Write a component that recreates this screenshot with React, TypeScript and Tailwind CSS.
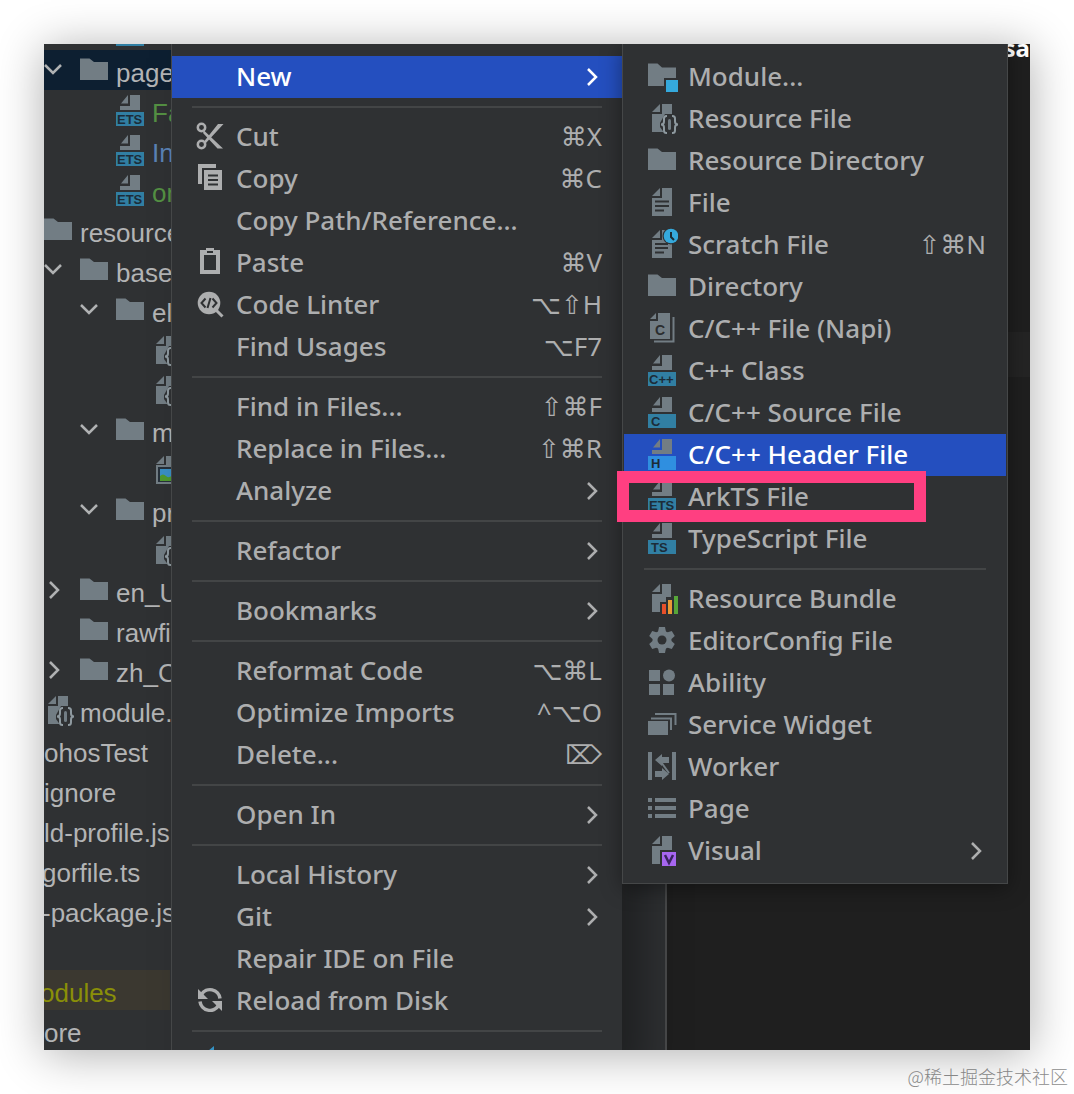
import type { ReactNode } from "react";
import clsx from "clsx";

type MenuEntry = {
  label: string;
  icon?: ReactNode;
  keys?: string;
  submenu?: boolean;
  active?: boolean;
};

type TreeEntry = {
  label: string;
  icon?: ReactNode;
  indent?: string;
  arrow?: "down" | "right" | "none";
  selected?: boolean;
  library?: boolean;
  color?: string;
};

/* ---------- icons ---------- */

function Icon({ children }: { children: ReactNode }) {
  return (
    <svg viewBox="0 0 32 32" className="h-8 w-8 shrink-0" fill="currentColor" aria-hidden="true">
      {children}
    </svg>
  );
}

function FolderIcon() {
  return (
    <Icon>
      <path d="M2 4.500h9.500l4.500 3.500h14V26H2z" />
    </Icon>
  );
}

function FileShape() {
  return <path d="M14 2L6 10h8zM16 2v10H6v18h20V2z" />;
}

function ModuleIcon() {
  return (
    <Icon>
      <path d="M2 3.500h9.500L16 7.500h14V18H18v8H2z" />
      <rect x="20" y="20" width="12" height="12" fill="#35a9dc" />
    </Icon>
  );
}

function JsonIcon() {
  return (
    <Icon>
      <FileShape />
      <path d="M19 12h9l4 8v7l-4 5h-9l-5-7v-4z" fill="#2f3133" />
      <g fill="none" stroke="#8e999f" strokeWidth="2">
        <path d="M21 14h-.5Q18 14 18 16.500v3Q18 22.500 15 22.500q3 0 3 3v3q0 2.500 2.500 2.500h.5" />
        <path d="M26 14h.5q2.500 0 2.500 2.500v3q0 3 3 3q-3 0-3 3v3q0 2.500-2.500 2.500H26" />
      </g>
      <rect x="22" y="17" width="3" height="11" rx="1.500" />
    </Icon>
  );
}

function TextFileIcon() {
  return (
    <Icon>
      <FileShape />
      <path d="M9 15.500h14M9 20h14M9 24.500h9" stroke="#2f3133" strokeWidth="2" />
    </Icon>
  );
}

function ScratchIcon() {
  return (
    <Icon>
      <FileShape />
      <path d="M9 16h13M9 20h13M9 24.500h9" stroke="#2f3133" strokeWidth="2" />
      <circle cx="25" cy="8" r="8.500" fill="#2f3133" />
      <circle cx="25" cy="8" r="7.300" fill="#35a9dc" />
      <path d="M25 4v5l3 3" stroke="#1d2b33" strokeWidth="2" fill="none" />
    </Icon>
  );
}

function NapiIcon() {
  return (
    <Icon>
      <path d="M10 1L4 7h6zM12 1v8H4v18h20V1z" />
      <path d="M8 29.500h19.500V5" fill="none" stroke="currentColor" strokeWidth="2" />
      <text x="9" y="23" fill="#2b2d2f" className="font-['Liberation_Sans'] text-[14px] font-bold">
        C
      </text>
    </Icon>
  );
}

function BadgeIcon({ text, bright }: { text: string; bright?: boolean }) {
  return (
    <Icon>
      <path d="M14 1L7 9.500h7zM16 1v11H6v4h20V1z" />
      <rect x="2" y="18" width="28" height="14" fill={bright ? "#2f8fe0" : "#317fa3"} />
      <text
        x={text.length === 3 ? 3 : 5}
        y="30"
        fill="#1c2c38"
        className="font-['Liberation_Sans'] text-[13px] font-bold"
      >
        {text}
      </text>
    </Icon>
  );
}

function ImageFileIcon() {
  return (
    <Icon>
      <path d="M14 2L6 10h8zM16 2v9H6v19h24V2z" />
      <rect x="8" y="13" width="22" height="15" fill="#26303a" />
      <rect x="10" y="15" width="20" height="12" fill="#3a8fc4" />
      <path d="M10 22q3-3 6 0t6-1l8 1v5H10z" fill="#4f9a2e" />
    </Icon>
  );
}

function BundleIcon() {
  return (
    <Icon>
      <path d="M14 2L6 10h8zM16 2v10H6v18h8V20h6v-5h5V2z" />
      <rect x="16" y="22" width="4" height="10" fill="#e8502a" />
      <rect x="22" y="18" width="4" height="14" fill="#ea9a35" />
      <rect x="28" y="14" width="4" height="18" fill="#57a639" />
    </Icon>
  );
}

function GearIcon() {
  return (
    <Icon>
      {[0, 60, 120].map((angle) => (
        <path key={angle} d="M13 3h6l1 5v16l-1 5h-6l-1-5V8z" transform={`rotate(${angle} 16 16)`} />
      ))}
      <circle cx="16" cy="16" r="9.500" />
      <circle cx="16" cy="16" r="4.500" fill="#2f3133" />
    </Icon>
  );
}

function AbilityIcon() {
  return (
    <Icon>
      <rect x="3" y="4" width="11" height="11" />
      <circle cx="23" cy="9.500" r="6" />
      <rect x="3" y="18" width="11" height="11" />
      <rect x="17" y="18" width="11" height="11" />
    </Icon>
  );
}

function WidgetIcon() {
  return (
    <Icon>
      <rect x="2" y="13" width="20" height="14" />
      <path d="M5 10.500h20V22M9 6h20.500v11" fill="none" stroke="currentColor" strokeWidth="2" />
    </Icon>
  );
}

function WorkerIcon() {
  return (
    <Icon>
      <rect x="2" y="2" width="4" height="28" />
      <rect x="26" y="2" width="4" height="28" />
      <path d="M9 10l7-6v3h7v6h-7v3zM23 24l-7-6v3H9v6h7v3z" />
      <path d="M15 12l8 11" stroke="currentColor" strokeWidth="2" />
    </Icon>
  );
}

function PageIcon() {
  return (
    <Icon>
      <path d="M2 6h4v4H2zM9 6h21v4H9zM2 14h4v4H2zM9 14h21v4H9zM2 22h4v4H2zM9 22h21v4H9z" />
    </Icon>
  );
}

function VisualIcon() {
  return (
    <Icon>
      <path d="M14 2L6 10h8zM16 2v10H6v18h8V16h12V2z" />
      <rect x="16" y="18" width="14" height="14" fill="#a766f0" />
      <path d="M19 21l4 8 4-8" fill="none" stroke="#3b2460" strokeWidth="2.500" />
    </Icon>
  );
}

function CutIcon() {
  return (
    <Icon>
      <circle cx="7.500" cy="7.500" r="3.700" fill="none" stroke="currentColor" strokeWidth="2.500" />
      <circle cx="7.500" cy="24.500" r="3.700" fill="none" stroke="currentColor" strokeWidth="2.500" />
      <path d="M10 10.500L29 28.500h-5.500L9 13zM10 21.500L24 4h5.500L11.500 23.500z" />
    </Icon>
  );
}

function CopyIcon() {
  return (
    <Icon>
      <path d="M4 2h18v4H8v16H4z" />
      <rect x="10" y="8" width="18" height="20" />
      <path d="M14 13.500h10M14 18h10M14 22.500h10" stroke="#2f3133" strokeWidth="2" />
    </Icon>
  );
}

function PasteIcon() {
  return (
    <Icon>
      <path d="M6 4h6V2h8v2h6v24H6zM10 9v15h12V9z" fillRule="evenodd" />
      <path d="M13 6h6" stroke="#2f3133" strokeWidth="2" />
    </Icon>
  );
}

function LinterIcon() {
  return (
    <Icon>
      <circle cx="15" cy="15" r="11.300" />
      <path d="M21 21l7.500 7.500" stroke="currentColor" strokeWidth="3" />
      <path
        d="M11.500 10.500L7.500 15l4 4.500M18.500 10.500l4 4.500-4 4.500M16.500 10l-3 10"
        fill="none"
        stroke="#2f3133"
        strokeWidth="2"
      />
    </Icon>
  );
}

function ReloadIcon() {
  return (
    <Icon>
      {[0, 180].map((angle) => (
        <g key={angle} transform={`rotate(${angle} 16 16)`}>
          <path d="M4 5v10h10z" />
          <path d="M7.500 10.500A10 10 0 0 1 26 14.500" fill="none" stroke="currentColor" strokeWidth="3.500" />
        </g>
      ))}
    </Icon>
  );
}

function CompareIcon() {
  return (
    <Icon>
      <path d="M8 12L20 2v7h8v6h-8v7z" fill="#3592c4" />
    </Icon>
  );
}

function Chevron({ down }: { down?: boolean }) {
  return (
    <svg viewBox="0 0 20 20" className="h-5 w-5 shrink-0" fill="none" stroke="currentColor" strokeWidth="2.500" aria-hidden="true">
      <path d={down ? "M1 5l8 8 8-8" : "M6 2l8 8-8 8"} />
    </svg>
  );
}

/* ---------- data ---------- */

const tree: TreeEntry[] = [
  { label: "", icon: <BadgeIcon text="" />, indent: "pl-9", arrow: "none" },
  { label: "pages", icon: <FolderIcon />, arrow: "down", selected: true },
  { label: "Fa", icon: <BadgeIcon text="ETS" />, indent: "pl-9", arrow: "none", color: "text-[#549043]" },
  { label: "Index", icon: <BadgeIcon text="ETS" />, indent: "pl-9", arrow: "none", color: "text-[#5a82b5]" },
  { label: "on", icon: <BadgeIcon text="ETS" />, indent: "pl-9", arrow: "none", color: "text-[#549043]" },
  { label: "resources", icon: <FolderIcon />, indent: "-ml-0.5" },
  { label: "base", icon: <FolderIcon />, arrow: "down" },
  { label: "element", icon: <FolderIcon />, indent: "pl-9", arrow: "down" },
  { label: "", icon: <JsonIcon />, indent: "pl-[72px]", arrow: "none" },
  { label: "", icon: <JsonIcon />, indent: "pl-[72px]", arrow: "none" },
  { label: "media", icon: <FolderIcon />, indent: "pl-9", arrow: "down" },
  { label: "", icon: <ImageFileIcon />, indent: "pl-[72px]", arrow: "none" },
  { label: "profile", icon: <FolderIcon />, indent: "pl-9", arrow: "down" },
  { label: "", icon: <JsonIcon />, indent: "pl-[72px]", arrow: "none" },
  { label: "en_US", icon: <FolderIcon />, arrow: "right" },
  { label: "rawfile", icon: <FolderIcon />, arrow: "none" },
  { label: "zh_CN", icon: <FolderIcon />, arrow: "right" },
  { label: "module.", icon: <JsonIcon />, indent: "-ml-0.5" },
  { label: "ohosTest" },
  { label: "ignore" },
  { label: "ld-profile.js" },
  { label: "gorfile.ts", indent: "-ml-0.5" },
  { label: "-package.js", indent: "-ml-0.5" },
  { label: "" },
  { label: "odules", indent: "-ml-1", library: true, color: "text-[#8a8f08]" },
  { label: "ore" },
];

const contextMenu: MenuEntry[][] = [
  [{ label: "New", submenu: true, active: true }],
  [
    { label: "Cut", icon: <CutIcon />, keys: "⌘X" },
    { label: "Copy", icon: <CopyIcon />, keys: "⌘C" },
    { label: "Copy Path/Reference..." },
    { label: "Paste", icon: <PasteIcon />, keys: "⌘V" },
    { label: "Code Linter", icon: <LinterIcon />, keys: "⌥⇧H" },
    { label: "Find Usages", keys: "⌥F7" },
  ],
  [
    { label: "Find in Files...", keys: "⇧⌘F" },
    { label: "Replace in Files...", keys: "⇧⌘R" },
    { label: "Analyze", submenu: true },
  ],
  [{ label: "Refactor", submenu: true }],
  [{ label: "Bookmarks", submenu: true }],
  [
    { label: "Reformat Code", keys: "⌥⌘L" },
    { label: "Optimize Imports", keys: "^⌥O" },
    { label: "Delete...", keys: "⌦" },
  ],
  [{ label: "Open In", submenu: true }],
  [
    { label: "Local History", submenu: true },
    { label: "Git", submenu: true },
    { label: "Repair IDE on File" },
    { label: "Reload from Disk", icon: <ReloadIcon /> },
  ],
  [{ label: "", icon: <CompareIcon /> }],
];

const newMenu: MenuEntry[][] = [
  [
    { label: "Module...", icon: <ModuleIcon /> },
    { label: "Resource File", icon: <JsonIcon /> },
    { label: "Resource Directory", icon: <FolderIcon /> },
    { label: "File", icon: <TextFileIcon /> },
    { label: "Scratch File", icon: <ScratchIcon />, keys: "⇧⌘N" },
    { label: "Directory", icon: <FolderIcon /> },
    { label: "C/C++ File (Napi)", icon: <NapiIcon /> },
    { label: "C++ Class", icon: <BadgeIcon text="C++" /> },
    { label: "C/C++ Source File", icon: <BadgeIcon text="C" /> },
    { label: "C/C++ Header File", icon: <BadgeIcon text="H" bright />, active: true },
    { label: "ArkTS File", icon: <BadgeIcon text="ETS" /> },
    { label: "TypeScript File", icon: <BadgeIcon text="TS" /> },
  ],
  [
    { label: "Resource Bundle", icon: <BundleIcon /> },
    { label: "EditorConfig File", icon: <GearIcon /> },
    { label: "Ability", icon: <AbilityIcon /> },
    { label: "Service Widget", icon: <WidgetIcon /> },
    { label: "Worker", icon: <WorkerIcon /> },
    { label: "Page", icon: <PageIcon /> },
    { label: "Visual", icon: <VisualIcon />, submenu: true },
  ],
];

/* ---------- pieces ---------- */

function TreeRow({ entry }: { entry: TreeEntry }) {
  return (
    <li
      className={clsx(
        "flex h-10 items-center",
        entry.selected && "bg-[#0d1f31]",
        entry.library && "w-[126px] bg-[#3b3830]"
      )}
    >
      <div className={clsx("flex items-center", entry.indent)}>
        {entry.arrow === "none" && <span className="mr-3.5 w-5" />}
        {(entry.arrow === "down" || entry.arrow === "right") && (
          <button type="button" aria-label={`Toggle ${entry.label}`} className="mr-3.5 text-[#b0b2b3]">
            <Chevron down={entry.arrow === "down"} />
          </button>
        )}
        {entry.icon && <span className="mr-1.5 text-[#727d84]">{entry.icon}</span>}
        <span className={clsx("pt-1.5 text-[26px] leading-8 whitespace-nowrap", entry.color || "text-[#b3b4b5]")}>
          {entry.label}
        </span>
      </div>
    </li>
  );
}

function MenuRow({ entry, iconColor }: { entry: MenuEntry; iconColor: string }) {
  return (
    <button
      type="button"
      role="menuitem"
      aria-label={entry.label || "Compare"}
      className={clsx(
        "flex h-[42px] w-full items-center pr-5 pl-[22px] text-left text-[26px] leading-8 font-medium",
        entry.active ? "bg-[#244fbf] text-white" : "text-[#adaeaf]"
      )}
    >
      <span className={clsx("mr-2.5 mb-0.5 h-8 w-8 shrink-0", iconColor)}>{entry.icon}</span>
      <span className="flex-1 pb-0.5 whitespace-nowrap">{entry.label}</span>
      {entry.keys && (
        <kbd className="pb-0.5 font-['Noto_Sans','DejaVu_Sans',sans-serif] font-normal whitespace-nowrap">
          {entry.keys}
        </kbd>
      )}
      {entry.submenu && <Chevron />}
    </button>
  );
}

function Menu({ groups, iconColor, className }: { groups: MenuEntry[][]; iconColor: string; className: string }) {
  return (
    <div
      role="menu"
      className={clsx("border-[#454748] bg-[#2f3133] pt-3 font-['Noto_Sans','DejaVu_Sans',sans-serif]", className)}
    >
      {groups.map((group, i) => (
        <div key={i}>
          {i > 0 && <hr className="mx-5 my-2 border-t-2 border-[#434546]" />}
          {group.map((entry) => (
            <MenuRow key={entry.label} entry={entry} iconColor={iconColor} />
          ))}
        </div>
      ))}
    </div>
  );
}

export default function App() {
  return (
    <main className="bg-white px-11 pt-11 font-['Liberation_Sans',Arial,sans-serif]">
      <div className="relative flex overflow-hidden bg-[#1f1f1f] shadow-[0_4px_44px_rgba(0,0,0,0.32)]">
        {/* Project tree */}
        <ul className="-mt-[34px] w-[623px] shrink-0 border-r-2 border-[#4a4b4c] bg-[#2f3133]">
          {tree.map((entry, i) => (
            <TreeRow key={i} entry={entry} />
          ))}
        </ul>

        {/* Editor */}
        <div className="min-w-0 flex-1">
          <div className="-mt-3 mb-[268px] h-8 text-right font-['Noto_Sans',sans-serif] text-[24px] leading-8 font-bold text-white">
            sa
          </div>
          <div className="h-[45px] bg-[#242424]" />
        </div>

        {/* Context menu with the "New" submenu open */}
        <div className="absolute top-0 left-[127px] flex items-start">
          <Menu
            groups={contextMenu}
            iconColor="text-[#adaeaf]"
            className="w-[451px] border-l shadow-[24px_0_40px_rgba(0,0,0,0.35)]"
          />
          <Menu
            groups={newMenu}
            iconColor="text-[#727d84]"
            className="z-10 w-[386px] border-x border-b px-px pb-[11px] shadow-[0_4px_20px_rgba(0,0,0,0.4)]"
          />
        </div>

        {/* Highlight box around "ArkTS File" */}
        <div className="absolute top-[427px] left-[573px] z-20 h-[51px] w-[309px] border-[12px] border-[#ff3f81]" />
      </div>

      <footer className="-mr-[38px] flex h-11 justify-end pt-3 text-[18px] leading-7 font-light text-[#8f8f8f] font-['Noto_Sans_CJK_SC',sans-serif]">
        @稀土掘金技术社区
      </footer>
    </main>
  );
}
